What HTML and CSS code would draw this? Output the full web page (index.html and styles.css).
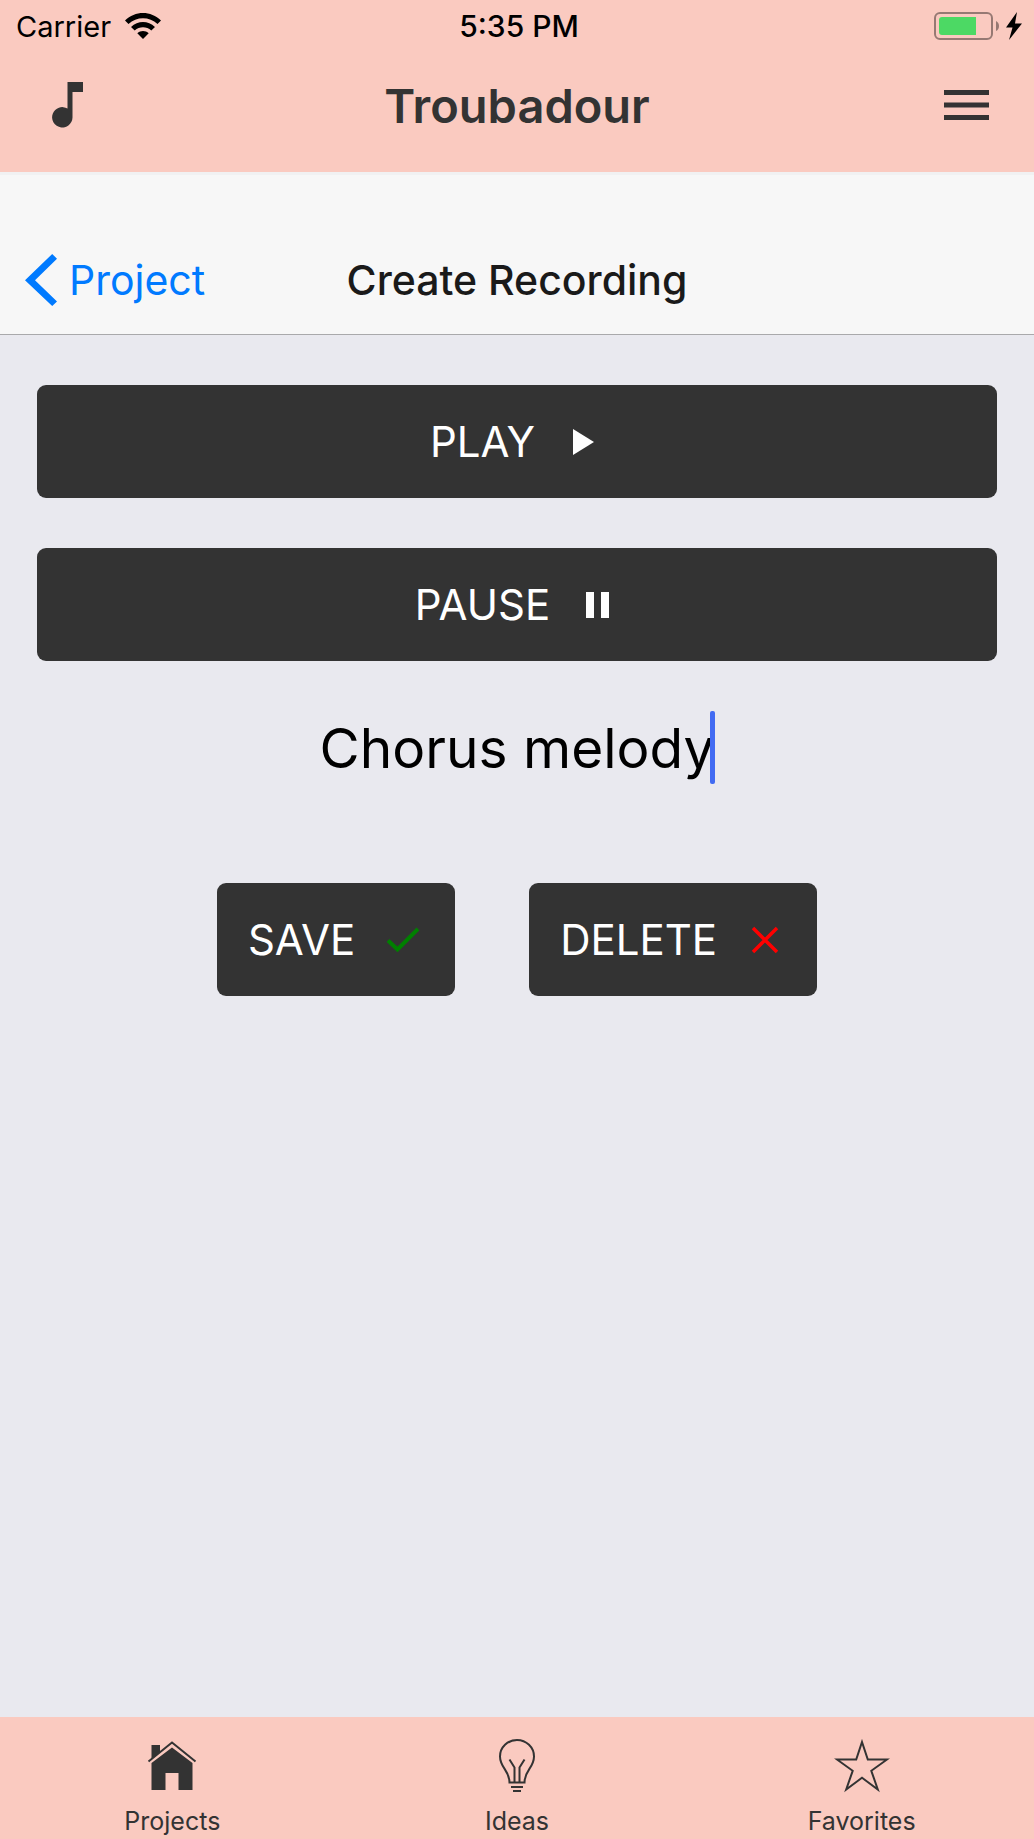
FILE: index.html
```html
<!DOCTYPE html>
<html lang="en">
<head>
<meta charset="utf-8">
<meta name="viewport" content="width=device-width, initial-scale=1">
<title>Troubadour</title>
<link rel="stylesheet" href="styles.css">
</head>
<body>
<div class="app">
  <header class="header">
    <div class="status">
      <div class="status-left">
        <span>Carrier</span>
        <svg class="wifi" viewBox="0 0 36 26" aria-hidden="true">
          <path d="M0 7.500C10-2.500 26-2.500 36 7.500L32.500 11C24.500 3.200 11.500 3.200 3.500 11Z"/>
          <path d="M6 14C13 7.300 23 7.300 30 14L26.300 17.500C21.500 13.200 14.500 13.200 9.700 17.500Z"/>
          <path d="M12.300 20.200C15.500 17.200 20.500 17.200 23.700 20.200L18 26Z"/>
        </svg>
      </div>
      <time class="clock">5:35 PM</time>
      <div class="status-right">
        <svg class="battery" viewBox="0 0 66 28" aria-hidden="true">
          <rect x="1" y="1" width="57" height="26" rx="5" fill="none" stroke="#967973" stroke-width="2"/>
          <path d="M62 9Q65 10.500 65 14T62 19Z" fill="#967973"/>
          <path d="M8 5H42V23H8Q5 23 5 20V8Q5 5 8 5Z" fill="#4cd964"/>
        </svg>
        <svg class="bolt" viewBox="0 0 16 28" aria-hidden="true"><path d="M11 0L0 15.500H6.500L3 28L16 11.500H9Z"/></svg>
      </div>
    </div>
    <div class="toolbar">
      <button class="icon-button" type="button" aria-label="Music">
        <svg class="note" viewBox="0 0 31 46" aria-hidden="true"><path d="M15.500 0H31V10H20.500V35.500A10.200 10.200 0 1 1 15.500 26.500Z"/></svg>
      </button>
      <h1 class="brand">Troubadour</h1>
      <button class="icon-button" type="button" aria-label="Menu">
        <svg class="burger" viewBox="0 0 45 30" aria-hidden="true"><path d="M0 0H45V5H0ZM0 12.500H45V17.500H0ZM0 25H45V30H0Z"/></svg>
      </button>
    </div>
  </header>

  <nav class="navbar">
    <a class="back" href="#project">
      <svg class="chevron" viewBox="0 0 32 52" aria-hidden="true"><path d="M27.200 0L32 4.800L10 26.300L32 47.500L27.200 52L0 26.300Z"/></svg>
      <span>Project</span>
    </a>
    <h2 class="title">Create Recording</h2>
  </nav>

  <main class="content">
    <button class="button" type="button">
      <span>PLAY</span>
      <svg class="glyph" viewBox="0 0 32 32" aria-hidden="true"><path fill="currentColor" d="M6 3L27 16L6 29Z"/></svg>
    </button>
    <button class="button" type="button">
      <span>PAUSE</span>
      <svg class="glyph" viewBox="0 0 32 32" aria-hidden="true"><path fill="currentColor" d="M4 3H12V29H4ZM19 3H27V29H19Z"/></svg>
    </button>
    <div class="field">
      <input class="name" type="text" value="Chorus melody" aria-label="Recording name">
      <span class="caret"></span>
    </div>
    <div class="actions">
      <button class="button" type="button">
        <span>SAVE</span>
        <svg class="glyph" viewBox="0 0 32 32" aria-hidden="true"><path fill="none" stroke="#008000" stroke-width="4" d="M1 16.500L10.500 25.500L31 5"/></svg>
      </button>
      <button class="button" type="button">
        <span>DELETE</span>
        <svg class="glyph" viewBox="0 0 32 32" aria-hidden="true"><path fill="none" stroke="#ff0000" stroke-width="3.500" d="M4 4L28 28M28 4L4 28"/></svg>
      </button>
    </div>
  </main>

  <nav class="tabs">
    <a class="tab" href="#projects">
      <svg class="tab-icon" viewBox="0 0 56 56" aria-hidden="true">
        <path fill="#333" d="M7.500 6H16V13L7.500 20ZM28 8.500L48.500 24V51H34.500V34H21.500V51H7.500V24Z"/>
        <path fill="none" stroke="#333" stroke-width="2" d="M4.500 22.500L28 3.500L51.500 22.500"/>
      </svg>
      <span>Projects</span>
    </a>
    <a class="tab" href="#ideas">
      <svg class="tab-icon" viewBox="0 0 56 56" aria-hidden="true">
        <path fill="none" stroke="#333" stroke-width="2" d="M20.500 43.500C20.500 31 11 29 11 17.500A17 16.500 0 0 1 45 17.500C45 29 35.500 31 35.500 43.500ZM20.500 20.500L25.500 28.500V43M35.500 20.500L30.500 28.500V43M22 48H34M24 52H32"/>
      </svg>
      <span>Ideas</span>
    </a>
    <a class="tab" href="#favorites">
      <svg class="tab-icon" viewBox="0 0 56 56" aria-hidden="true">
        <path fill="none" stroke="#333" stroke-width="2" d="M28 3L33.800 20.500H53L37.300 31.800L43.800 50.500L28 38.800L12.200 50.500L18.700 31.800L3 20.500H22.200Z"/>
      </svg>
      <span>Favorites</span>
    </a>
  </nav>
</div>
</body>
</html>
```

FILE: styles.css
```css
* {
  box-sizing: border-box;
}

body {
  margin: 0;
  font-family: Inter, "Liberation Sans", sans-serif;
  color: #000;
  background: #e9e9ef;
}

svg {
  display: block;
  flex: none;
}

button {
  border: 0;
  font: inherit;
  cursor: pointer;
}

.app {
  display: flex;
  flex-direction: column;
  min-height: 100vh;
}

.header {
  background: #facac0;
}

.status {
  display: grid;
  grid-template-columns: 1fr auto 1fr;
  align-items: center;
  height: 52px;
  padding: 0 12px 0 16px;
  font-size: 29px;
}

.status-left,
.status-right {
  display: flex;
  align-items: center;
}

.status-left {
  gap: 14px;
}

.status-right {
  justify-content: flex-end;
  gap: 6px;
}

.wifi {
  width: 36px;
  height: 26px;
}

.clock {
  font-size: 30px;
  font-weight: 500;
}

.battery {
  width: 66px;
  height: 28px;
}

.bolt {
  width: 16px;
  height: 28px;
}

.toolbar {
  display: grid;
  grid-template-columns: 1fr auto 1fr;
  align-items: center;
  height: 120px;
  padding: 0 45px 14px;
  color: #333;
}

.icon-button {
  justify-self: start;
  padding: 0;
  background: none;
}

.icon-button:first-child {
  padding-left: 7px;
}

.icon-button:last-child {
  justify-self: end;
}

.icon-button svg {
  fill: #333;
}

.note {
  width: 31px;
  height: 46px;
}

.burger {
  width: 45px;
  height: 30px;
}

.brand {
  margin: 0;
  font-size: 47px;
  font-weight: 600;
}

.navbar {
  display: grid;
  grid-template-columns: 1fr auto 1fr;
  align-items: end;
  height: 163px;
  padding: 0 25px 28px;
  border-top: 3px solid #f1f1f2;
  border-bottom: 1px solid #a9a9ab;
  background: #f7f7f7;
  font-size: 41px;
  line-height: 52px;
}

.back {
  display: flex;
  align-items: center;
  gap: 12px;
  color: #007aff;
  text-decoration: none;
}

.chevron {
  width: 32px;
  height: 52px;
  fill: #007aff;
}

.title {
  margin: 0;
  color: #1a1a1a;
  font-size: 41px;
  font-weight: 500;
}

.content {
  display: flex;
  flex: 1;
  flex-direction: column;
  padding: 50px 37px;
}

.button {
  display: flex;
  align-items: center;
  justify-content: center;
  gap: 32px;
  height: 113px;
  padding: 0 36px 0 31px;
  border-radius: 9px;
  background: #333;
  color: #fff;
  font-size: 42px;
}

.content > .button {
  margin-bottom: 50px;
}

.glyph {
  width: 32px;
  height: 32px;
}

.field {
  position: relative;
  align-self: center;
  height: 74px;
}

.name {
  display: block;
  height: 74px;
  padding: 0;
  border: 0;
  outline: 0;
  background: none;
  color: #000;
  font: inherit;
  font-size: 55px;
  text-align: center;
  field-sizing: content;
}

.caret {
  position: absolute;
  top: 0;
  right: -1px;
  width: 5px;
  height: 73px;
  border-radius: 2px;
  background: #426bf2;
}

.actions {
  display: flex;
  justify-content: center;
  gap: 74px;
  margin-top: 98px;
}

.tabs {
  display: grid;
  grid-template-columns: repeat(3, 1fr);
  height: 122px;
  padding-top: 22px;
  background: #facac0;
}

.tab {
  display: flex;
  flex-direction: column;
  align-items: center;
  gap: 10px;
  color: #333;
  font-size: 25px;
  line-height: 32px;
  text-decoration: none;
}

.tab-icon {
  width: 56px;
  height: 56px;
}
```
